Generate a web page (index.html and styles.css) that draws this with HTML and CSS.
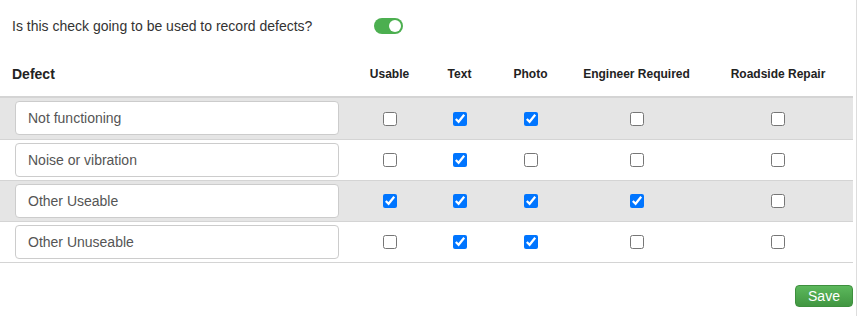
FILE: index.html
```html
<!DOCTYPE html>
<html lang="en">

    <head>
        <meta charset="UTF-8">
        <title>Defect Settings</title>
        <link rel="stylesheet" href="styles.css">
    </head>

    <body>
        <div class="panel">

            <div class="question">
                <span class="question-text">Is this check going to be used to record defects?</span>
                <span class="toggle on"><span class="knob"></span></span>
            </div>

            <table class="defects">
                <colgroup>
                    <col class="col-defect">
                    <col class="col-usable">
                    <col class="col-text">
                    <col class="col-photo">
                    <col class="col-engineer">
                    <col class="col-roadside">
                </colgroup>
                <thead>
                    <tr>
                        <th class="name-head">Defect</th>
                        <th>Usable</th>
                        <th>Text</th>
                        <th>Photo</th>
                        <th>Engineer Required</th>
                        <th>Roadside Repair</th>
                    </tr>
                </thead>
                <tbody>
                    <tr class="striped first">
                        <td class="name"><input type="text" value="Not functioning"></td>
                        <td><input type="checkbox"></td>
                        <td><input type="checkbox" checked></td>
                        <td><input type="checkbox" checked></td>
                        <td><input type="checkbox"></td>
                        <td><input type="checkbox"></td>
                    </tr>
                    <tr>
                        <td class="name"><input type="text" value="Noise or vibration"></td>
                        <td><input type="checkbox"></td>
                        <td><input type="checkbox" checked></td>
                        <td><input type="checkbox"></td>
                        <td><input type="checkbox"></td>
                        <td><input type="checkbox"></td>
                    </tr>
                    <tr class="striped">
                        <td class="name"><input type="text" value="Other Useable"></td>
                        <td><input type="checkbox" checked></td>
                        <td><input type="checkbox" checked></td>
                        <td><input type="checkbox" checked></td>
                        <td><input type="checkbox" checked></td>
                        <td><input type="checkbox"></td>
                    </tr>
                    <tr>
                        <td class="name"><input type="text" value="Other Unuseable"></td>
                        <td><input type="checkbox"></td>
                        <td><input type="checkbox" checked></td>
                        <td><input type="checkbox" checked></td>
                        <td><input type="checkbox"></td>
                        <td><input type="checkbox"></td>
                    </tr>
                </tbody>
            </table>

            <div class="actions">
                <button class="btn-save">Save</button>
            </div>

        </div>
    </body>

</html>
```

FILE: styles.css
```css
* {
    padding: 0;
    margin: 0;
    box-sizing: border-box;
}

body {
    font-family: "Liberation Sans", Arial, sans-serif;
    color: #333;
    background-color: #fff;
}

.panel {
    width: 857px;
    min-height: 316px;
    padding-right: 3px;
    border-right: 1px solid #ddd;
}

/* question + switch */
.question {
    display: flex;
    align-items: center;
    height: 52px;
    padding-left: 12px;
}

.question-text {
    width: 362px;
    font-size: 14px;
}

.toggle {
    display: flex;
    align-items: center;
    width: 29px;
    height: 16px;
    padding: 0 2px;
    border-radius: 8px;
    background-color: #ccc;
}

.toggle.on {
    justify-content: flex-end;
    background-color: #4caf50;
}

.knob {
    width: 12px;
    height: 12px;
    border-radius: 50%;
    background-color: #fff;
}

/* table */
.defects {
    width: 853px;
    table-layout: fixed;
    border-collapse: collapse;
}

.col-defect { width: 351px; }
.col-usable { width: 77px; }
.col-text { width: 63px; }
.col-photo { width: 79px; }
.col-engineer { width: 133px; }
.col-roadside { width: 150px; }

.defects th {
    height: 45px;
    font-size: 12px;
    font-weight: bold;
    color: #222;
    text-align: center;
    border-bottom: 2px solid #d4d4d4;
}

.defects th.name-head {
    text-align: left;
    padding-left: 12px;
    font-size: 14px;
}

.defects td {
    height: 41px;
    text-align: center;
    vertical-align: middle;
    border-bottom: 1px solid #d4d4d4;
}

.defects tr.first td {
    height: 42px;
}

.defects tr.striped td {
    background-color: #e5e5e5;
}

.defects td.name {
    text-align: left;
    padding-left: 15px;
}

.name input {
    display: block;
    width: 324px;
    height: 34px;
    padding: 0 12px;
    font-family: "Liberation Sans", Arial, sans-serif;
    font-size: 14px;
    color: #555;
    background-color: #fff;
    border: 1px solid #ccc;
    border-radius: 4px;
}

.defects input[type="checkbox"] {
    width: 14px;
    height: 14px;
    vertical-align: middle;
}

/* save */
.actions {
    display: flex;
    justify-content: flex-end;
    padding-top: 22px;
}

.btn-save {
    width: 58px;
    height: 22px;
    font-family: "Liberation Sans", Arial, sans-serif;
    font-size: 14px;
    color: #fff;
    border: 1px solid #3e8f3e;
    border-radius: 4px;
    background: linear-gradient(#5cb85c, #419641);
}
```
